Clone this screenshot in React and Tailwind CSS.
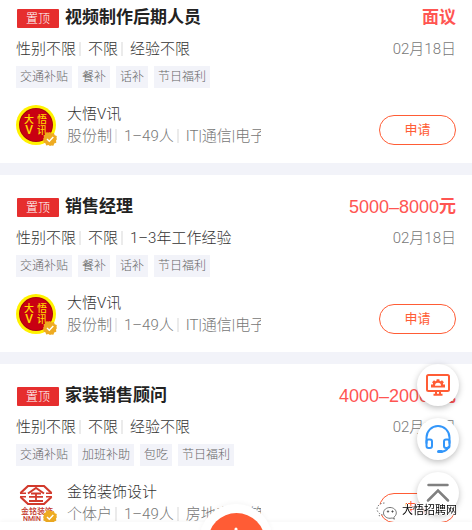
import React from 'react';

const jobs = [
  {
    id: 1,
    title: '视频制作后期人员',
    salary: '面议',
    date: '02月18日',
    needs: ['性别不限', '不限', '经验不限'],
    tags: ['交通补贴', '餐补', '话补', '节日福利'],
    company: '大悟V讯',
    info: ['股份制', '1–49人', 'IT|通信|电子'],
    logo: 'dawu',
  },
  {
    id: 2,
    title: '销售经理',
    range: '5000–8000',
    salary: '元',
    date: '02月18日',
    needs: ['性别不限', '不限', '1–3年工作经验'],
    tags: ['交通补贴', '餐补', '话补', '节日福利'],
    company: '大悟V讯',
    info: ['股份制', '1–49人', 'IT|通信|电子'],
    logo: 'dawu',
  },
  {
    id: 3,
    title: '家装销售顾问',
    range: '4000–20000',
    salary: '元',
    date: '02月18日',
    needs: ['性别不限', '不限', '经验不限'],
    tags: ['交通补贴', '加班补助', '包吃', '节日福利'],
    company: '金铭装饰设计',
    info: ['个体户', '1–49人', '房地产|建筑'],
    logo: 'jinming',
  },
];

const DawuLogo = () => (
  <svg viewBox="0 0 40 40" className="w-10 h-10" aria-hidden="true">
    <circle cx="20" cy="20" r="20" fill="#fff200" />
    <circle cx="20" cy="20" r="17" fill="#a80010" />
    <circle cx="20" cy="20" r="16" fill="#c90012" />
    <g fill="#ffd800" fontSize="10" fontWeight="500" textAnchor="middle">
      <text x="13" y="18">大</text>
      <text x="26" y="18">悟</text>
      <text x="13" y="29" fontSize="12">V</text>
      <text x="26" y="29">讯</text>
    </g>
  </svg>
);

const JinmingLogo = () => (
  <svg viewBox="0 0 40 40" className="w-10 h-10" aria-hidden="true">
    <g fill="none" stroke="#d23a2c" strokeWidth="2.2">
      <path d="M4.500 10 12 3h16l7.500 7M4.500 14 12 21h16l7.500-7" />
      <path d="M4 10.200h6M30 10.200h6M4 13.800h6M30 13.800h6" strokeWidth="1.400" />
      <path d="m12 10.500 8-5.500 8 5.500" strokeWidth="2" />
      <path d="M15 10.500h10M13 13.800h14M20 10v8M13 18h14" strokeWidth="1.800" />
    </g>
    <g fill="#c4392d" fontWeight="500" textAnchor="middle">
      <text x="21" y="31" fontSize="8">金铭装饰</text>
      <text x="16" y="38" fontSize="7">NMIN</text>
    </g>
  </svg>
);

const Verified = () => (
  <svg viewBox="0 0 14 14" className="absolute -right-px -bottom-px w-3.5 h-3.5" aria-hidden="true">
    <path
      d="M7 0l1.700 1.400 2.200-.3.8 2.100 2.100.8-.3 2.200L14 7l-1 1.600.3 2.200-2.100.8-.8 2.100-2.200-.3L7 14l-1.600-.9-2.200.3-.8-2.100-2.100-.8.3-2.200L0 7l.9-1.600-.3-2.200 2.100-.8.8-2.100 2.200.3z"
      fill="#eeab22"
    />
    <path d="m4 7 2.300 2.300L10.300 5" fill="none" stroke="#fff" strokeWidth="1.400" />
  </svg>
);

const Split = ({ items }) => (
  <ul className="flex items-center whitespace-nowrap">
    {items.map((item, i) => (
      <li key={item} className="flex shrink-0 items-center">
        {i > 0 && <span className="ml-[3px] mr-[7px] h-3.5 w-0.5 bg-[#ebebeb]" />}
        {item}
      </li>
    ))}
  </ul>
);

const JobCard = ({ job }) => (
  <article className="bg-white px-4 pt-5 pb-[18px] first:pt-1.5">
    <div className="flex items-center justify-between h-6">
      <div className="flex items-center">
        <span className="ml-px mr-1.5 flex h-[19px] w-[42px] items-center justify-center rounded-[1px] bg-[#e62e2e] pt-0.5 text-xs text-white">
          置顶
        </span>
        <h2 className="text-[17px] font-bold text-[#222]">{job.title}</h2>
      </div>
      <p className="flex items-center text-[17px] font-bold text-[#ff5552]">
        {job.range && (
          <span className="font-['Liberation_Sans',sans-serif] text-lg font-normal">{job.range}</span>
        )}
        {job.salary}
      </p>
    </div>

    <div className="mt-2 flex items-center justify-between text-[15px] leading-[22px]">
      <div className="text-[#333]">
        <Split items={job.needs} />
      </div>
      <time className="text-[#777]">{job.date}</time>
    </div>

    <ul className="mt-1.5 flex gap-1.5">
      {job.tags.map((tag) => (
        <li key={tag} className="bg-[#f2f3f9] px-1 text-xs leading-[22px] text-[#666]">
          {tag}
        </li>
      ))}
    </ul>

    <div className="mt-[17px] flex items-end">
      <div className="relative shrink-0">
        {job.logo === 'dawu' ? <DawuLogo /> : <JinmingLogo />}
        <Verified />
      </div>
      <div className="ml-[11px] flex h-10 w-[194px] flex-col justify-center overflow-hidden text-[15px] leading-[22px]">
        <h3 className="text-[#333]">{job.company}</h3>
        <div className="text-[#777]">
          <Split items={job.info} />
        </div>
      </div>
      <button
        type="button"
        className="ml-auto h-[30px] w-[77px] rounded-full border border-[#ff5c35] text-[13px] font-normal text-[#ff5c35]"
      >
        申请
      </button>
    </div>
  </article>
);

const FloatButton = ({ label, children }) => (
  <button
    type="button"
    aria-label={label}
    className="flex h-[42px] w-[42px] items-center justify-center rounded-full bg-white shadow-[0_2px_6px_rgba(0,0,0,0.25)]"
  >
    {children}
  </button>
);

const FloatMenu = () => (
  <div className="fixed right-[13px] bottom-4 flex flex-col gap-3">
    <FloatButton label="招聘大屏">
      <svg viewBox="0 0 26 24" className="w-[26px] h-6" fill="none" stroke="#ff5c35" strokeWidth="2">
        <rect x="2" y="2" width="22" height="16" rx="1.500" />
        <path d="M11 18.500v3M15 18.500v3M8.500 21.800h9" />
        <path
          d="M6 14.500v-3h1.800l.3-.9-1-1.400 1.900-1.900 1.400 1 .9-.4.400-1.700h2.600l.4 1.700.9.4 1.400-1 1.900 1.900-1 1.400.3.9H20v3z"
          fill="#ff5c35"
          stroke="none"
        />
        <path d="M10 12.800a3 3 0 0 1 6 0z" fill="#fff" stroke="none" />
      </svg>
    </FloatButton>
    <FloatButton label="客服">
      <svg viewBox="0 0 26 28" className="w-[26px] h-7" fill="none" stroke="#3296fa" strokeWidth="2" strokeLinecap="round">
        <path d="M1.500 18v-5.500a11.500 11.500 0 0 1 23 0V18" />
        <rect x="1.500" y="14.500" width="5.500" height="8.500" rx="2" />
        <rect x="19" y="14.500" width="5.500" height="8.500" rx="2" />
        <path d="M23.500 22c-1.500 3-4 4.500-7 4.700" />
        <path d="M13.500 26.500h3" strokeWidth="3" />
      </svg>
    </FloatButton>
    <FloatButton label="返回顶部">
      <svg viewBox="0 0 24 20" className="w-6 h-5" fill="none" stroke="#808080" strokeWidth="2.500" strokeLinecap="round">
        <path d="M2.500 2h19M2 17.500 12 7.500l10 10" />
      </svg>
    </FloatButton>
  </div>
);

const TabBar = () => (
  <nav className="fixed inset-x-0 -bottom-10 flex h-12 justify-center bg-white shadow-[0_-1px_4px_rgba(0,0,0,0.04)]">
    <button
      type="button"
      aria-label="发布"
      className="absolute -top-[18px] flex h-[74px] w-[74px] items-center justify-center rounded-full bg-white shadow-[0_-2px_4px_rgba(0,0,0,0.03)]"
    >
      <span className="flex h-[57px] w-[57px] items-center justify-center rounded-full bg-[#ff5c35]">
        <svg viewBox="0 0 28 28" className="w-7 h-7" stroke="#fff" strokeWidth="3" strokeLinecap="round">
          <path d="M14 2v24M2 14h24" />
        </svg>
      </span>
    </button>
  </nav>
);

const Watermark = () => (
  <div className="pointer-events-none fixed right-[15px] bottom-2.5 flex items-center gap-1">
    <svg viewBox="0 0 22 18" className="w-[22px] h-[18px]" fill="#fff" stroke="#555" strokeWidth="0.800">
      <path d="M8.500 1C4.400 1 1 3.700 1 7c0 1.900 1.100 3.500 2.700 4.600L3 14l2.700-1.400c.9.300 1.800.4 2.800.4" strokeDasharray="1.500 1.500" />
      <path d="M14 5.500c-3.700 0-6.500 2.400-6.500 5.400s2.800 5.400 6.500 5.400c.7 0 1.500-.1 2.200-.3l2.200 1.200-.6-2c1.500-1 2.500-2.500 2.500-4.300 0-3-2.700-5.400-6.300-5.400z" />
      <circle cx="12" cy="9.500" r=".7" fill="#333" />
      <circle cx="16.500" cy="9.500" r=".7" fill="#333" />
    </svg>
    <span className="text-[11px] font-normal leading-4 text-black [text-shadow:1px_0_#fff,-1px_0_#fff,0_1px_#fff,0_-1px_#fff]">
      大悟招聘网
    </span>
  </div>
);

export default function App() {
  return (
    <div className="h-screen overflow-hidden bg-white font-light font-['Roboto','Noto_Sans_CJK_SC',sans-serif]">
      <main className="flex flex-col gap-3 bg-[#f2f3f9]">
        {jobs.map((job) => (
          <JobCard key={job.id} job={job} />
        ))}
      </main>
      <TabBar />
      <FloatMenu />
      <Watermark />
    </div>
  );
}
